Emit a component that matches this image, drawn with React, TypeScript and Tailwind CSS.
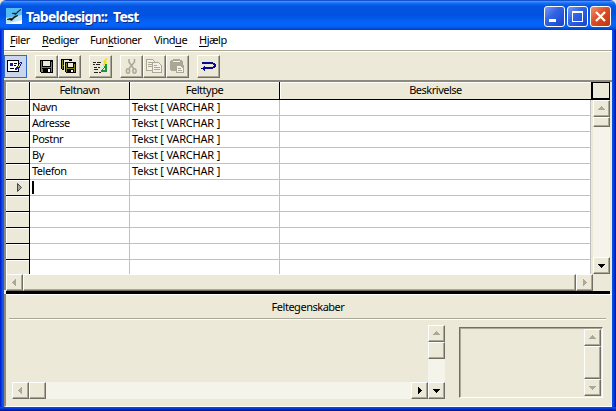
import React from "react";

const sans = "font-['Noto_Sans',sans-serif] text-[11px] leading-[16px] tracking-[-0.48px] text-black";

type Dir = "up" | "down" | "left" | "right";
const arrows: Record<Dir, string> = {
  up: "M4 9h7v-1h-1v-1h-1v-1h-1v-1h-1v1h-1v1h-1v1h-1z",
  down: "M4 6h7v1h-1v1h-1v1h-1v1h-1v-1h-1v-1h-1v-1h-1z",
  left: "M9 4v7h-1v-1h-1v-1h-1v-1h-1v-1h1v-1h1v-1h1v-1z",
  right: "M6 4v7h1v-1h1v-1h1v-1h1v-1h-1v-1h-1v-1h-1v-1z",
};
const raised =
  "bg-[#ece9d8] border border-t-white border-l-white border-r-[#716f64] border-b-[#716f64] shadow-[inset_-1px_-1px_#aca899]";

function ScrollButton({ dir, active = false }: { dir: Dir; active?: boolean }) {
  return (
    <div className={`h-[17px] w-[17px] shrink-0 ${raised}`}>
      <svg width="15" height="15" shapeRendering="crispEdges">
        <path d={arrows[dir]} fill={active ? "#000" : "#aca899"} />
      </svg>
    </div>
  );
}

function ToolButton({ children, className = "" }: { children: React.ReactNode; className?: string }) {
  return (
    <div className={`flex h-[23px] w-[23px] shrink-0 items-center justify-center ${raised} ${className}`}>
      <svg width="19" height="19" viewBox="0 0 19 19" shapeRendering="crispEdges">
        {children}
      </svg>
    </div>
  );
}

function Floppy() {
  return (
    <>
      <path d="M0 0h13v13H1l-1-1z" fill="#000" />
      <path d="M1 1h1v11H1zM11 2h1v10h-1zM2 7h9v1H2z" fill="#85831b" />
      <path d="M3 1h7v5H3z" fill="#ece9d8" />
      <path d="M8 9h2v3H8z" fill="#fff" />
      <path d="M2 9h1v3H2z" fill="#85831b" />
    </>
  );
}

function SmallFloppy() {
  return (
    <>
      <path d="M0 0h11v11H1l-1-1z" fill="#000" />
      <path d="M1 1h1v9H1zM9 2h1v8H9zM2 6h7v1H2z" fill="#85831b" />
      <path d="M3 1h5v4H3z" fill="#ece9d8" />
      <path d="M6 8h2v2H6z" fill="#fff" />
    </>
  );
}

function CaptionButton({ kind }: { kind: "min" | "max" | "close" }) {
  const bg =
    kind === "close"
      ? "bg-[linear-gradient(135deg,#ee9273,#dc4e25_45%,#bd3511)]"
      : "bg-[linear-gradient(135deg,#789df0,#3264e5_40%,#1744cb)]";
  return (
    <div className={`h-[21px] w-[21px] rounded-[3px] border border-white ${bg}`}>
      <svg width="19" height="19" fill="none" stroke="#fff">
        {kind === "min" && <path d="M4 13.5h7" strokeWidth="3" />}
        {kind === "max" && <path d="M4 5.5h11M4.5 5v10M14.5 5v10M4 14.5h11M4 4.5h11" />}
        {kind === "close" && <path d="M5 5l9 9M14 5l-9 9" strokeWidth="2.3" />}
      </svg>
    </div>
  );
}

const menus = [
  ["", "F", "iler", "w-[32px]"],
  ["", "R", "ediger", "w-[48px]"],
  ["Fun", "k", "tioner", "w-[64px]"],
  ["Vind", "u", "e", "w-[45px]"],
  ["", "H", "jælp", "w-[40px]"],
];
const names = ["Navn", "Adresse", "Postnr", "By", "Telefon", "", "", "", "", "", ""];
const headCell =
  "h-[18px] shrink-0 border-b border-black bg-[#ece9d8] text-center shadow-[inset_1px_1px_#fff] leading-[15px]";

export default function App() {
  return (
    <div className={`flex h-[411px] w-[616px] flex-col overflow-hidden bg-[#ece9d8] ${sans}`}>
      <header className="flex h-[30px] shrink-0 items-center rounded-t-[6px] bg-[linear-gradient(180deg,#0831b8_0%,#3a93ff_5%,#1570f4_10%,#0555e2_20%,#0052df_50%,#0563f8_75%,#0361f5_88%,#003dc8_100%)] pl-[6px] pr-[5px]">
        <svg width="16" height="16" className="mt-[2px]">
          <path d="M0 0h16v16H0z" fill="#fff" />
          <path d="M0 0h16v7L0 13z" fill="#55bdf3" />
          <path d="M0 10l16-3v5L0 16z" fill="#b9e3f8" />
          <path d="M6 5.500q3-1 4 0 2-3 5-4-3 2-5 5-2-1-4-1M1 11.500q4-2 5-1 2-3 6-3-4 2-6 5-2-1-5-1" fill="#111" stroke="#111" strokeWidth=".6" />
        </svg>
        <h1 className="ml-[4px] mt-[3px] w-[300px] whitespace-nowrap text-[14px] font-bold leading-[20px] tracking-[-0.75px] text-white [text-shadow:1px_1px_#062b91] [word-spacing:3px]">
          Tabeldesign:: Test
        </h1>
        <div className="ml-auto mt-[3px] flex gap-[2px]">
          <CaptionButton kind="min" />
          <CaptionButton kind="max" />
          <CaptionButton kind="close" />
        </div>
      </header>

      <div className="flex h-[377px] shrink-0">
        <div className="w-[4px] shrink-0 bg-[linear-gradient(90deg,#0019cf,#0831d9_30%,#1661ee_75%,#0855dd)]" />
        <main className="flex w-[608px] shrink-0 flex-col">
          <nav className="flex h-[20px] shrink-0 bg-white pl-[6px] leading-[20px]">
            {menus.map(([a, u, b, w]) => (
              <span key={u} className={`${w} whitespace-nowrap`}>
                {a}
                <u className="underline-offset-[2px]">{u}</u>
                {b}
              </span>
            ))}
          </nav>
          <div className="flex h-[30px] shrink-0 border-t border-[#aca899] pt-[4px] shadow-[inset_0_1px_#fff]">
            <div className="flex h-[23px] w-[23px] items-center justify-center border border-[#316ac5] bg-[#c9d6ed]">
              <svg width="19" height="19" viewBox="0 0 19 19" shapeRendering="crispEdges">
                <path d="M1 3h12v12H1z" fill="#000" />
                <path d="M2 4h10v10H2z" fill="#fff" />
                <path d="M4 6h3v3H4z" fill="#16169c" />
                <path d="M8 6h3v1H8zM8 8h2v1H8zM4 11h4v1H4z" fill="#000" />
                <path d="M14 5h2v2h-1v2h-1v2h-1v1h-2v1H9v-2h1v-1h1V9h1V8h1V6h1z" fill="#0e18a0" />
                <path d="M14 6h1v1h-1v2h-1v1h-1V9h1V7h1z" fill="#f4e933" />
              </svg>
            </div>
            <ToolButton className="ml-[8px]">
              <g transform="translate(3 3)"><Floppy /></g>
            </ToolButton>
            <ToolButton>
              <g transform="translate(1 2)"><SmallFloppy /></g>
              <path d="M4 4h12v12H4z" fill="#ece9d8" />
              <g transform="translate(5 5)"><SmallFloppy /></g>
            </ToolButton>
            <ToolButton className="ml-[8px]">
              <path d="M2 5h3v1H2zM6 5h4v1H6zM2 7h2v1H2zM5 7h4v1H5zM3 10h3v1H3zM7 10h2v1H7zM3 12h4v1H3zM3 15h4v1H3zM8 15h2v1H8z" fill="#222" />
              <path d="M15 1h1v2h-1v2h1v1h-1v1h-1v1h-1v1h-1V7h1V5h-1V4h1V3h1V2h1z" fill="#eee02a" />
              <path d="M14 7h2v8h-6v-2h1v-1h1v-1h1V9h1z" fill="#149447" />
              <path d="M13 11h1v2h-2v-1h1z" fill="#ece9d8" />
            </ToolButton>
            <ToolButton className="ml-[8px]">
              <g stroke="#aaa797" fill="none" shapeRendering="auto" strokeWidth="1.5">
                <path d="M7 2v3l4.500 6.500M12.500 2v3L7 11.500" />
                <ellipse cx="6" cy="14" rx="1.600" ry="2.300" />
                <ellipse cx="12.500" cy="14" rx="1.600" ry="2.300" />
              </g>
            </ToolButton>
            <ToolButton>
              <g fill="#f3f1e6" stroke="#aaa797">
                <path d="M1.500 2.500h6l2 2v9h-8z" />
                <path d="M3 5.500h4M3 7.500h4M3 9.500h4" />
                <path d="M7.500 5.500h6l3 3v7h-9z" />
                <path d="M9 8.500h3M9 10.500h6M9 12.500h6" />
              </g>
            </ToolButton>
            <ToolButton>
              <path d="M3 3h2V2h7v1h2v1h1v4h1v8H8v-2H3v-1H2V4h1z" fill="#aaa797" />
              <path d="M5 4h7v1H5zM9 9h4v1h1v1h1v4H9z" fill="#f3f1e6" />
              <path d="M10 11h3v1h-3zM10 13h4v1h-4z" fill="#aaa797" />
            </ToolButton>
            <ToolButton className="ml-[8px]">
              <path d="M3 5h11v1h2v1h1v3h-1v1h-2v1H6v2H5v-1H4v-1H2v-1h2v-1h1V9h1v1h8V9h1V8h-1V7H3z" fill="#0a0a8c" />
            </ToolButton>
          </div>

          <section className="flex h-[210px] shrink-0 flex-col border-l-2 border-t-2 border-[#8d8a7c]">
            <div className="flex h-[192px] shrink-0">
              <div className="w-[585px] overflow-hidden bg-white">
                <div className="flex">
                  <div className={`w-[24px] border-r ${headCell}`} />
                  <div className={`w-[100px] border-r ${headCell}`}>Feltnavn</div>
                  <div className={`w-[150px] border-r ${headCell}`}>Felttype</div>
                  <div className={`w-[311px] ${headCell}`}>Beskrivelse</div>
                </div>
                {names.map((n, i) => (
                  <div key={i} className="flex h-[16px] leading-[14px]">
                    <div className="flex w-[24px] shrink-0 justify-center border-b border-r border-black bg-[#ece9d8] pl-[3px] pt-[3px] shadow-[inset_1px_1px_#fff]">
                      {i === 5 && (
                        <svg width="7" height="10">
                          <path d="M1.500 .5v8l4-4z" fill="#aca899" stroke="#444" />
                        </svg>
                      )}
                    </div>
                    <div className="w-[100px] shrink-0 border-b border-r border-[#c0c0c0] pl-[2px]">
                      {n}
                      {i === 5 && <div className="mt-[1px] h-[13px] w-[2px] bg-black" />}
                    </div>
                    <div className="w-[150px] shrink-0 whitespace-nowrap border-b border-r border-[#c0c0c0] pl-[2px] tracking-[-0.2px]">
                      {n && "Tekst [ VARCHAR ]"}
                    </div>
                    <div className="w-[311px] shrink-0 border-b border-r border-[#c0c0c0]" />
                  </div>
                ))}
              </div>
              <div className="flex w-[19px] shrink-0 flex-col">
                <div className="h-[18px] shrink-0 border-2 border-r border-t border-black bg-[#ece9d8]" />
                <div className="ml-[2px] flex grow flex-col bg-[#f5f4eb]">
                  <ScrollButton dir="up" />
                  <div className={`h-[10px] ${raised}`} />
                  <div className="mt-auto"><ScrollButton dir="down" active /></div>
                </div>
              </div>
            </div>
            <div className="flex h-[17px] shrink-0">
              <ScrollButton dir="left" />
              <div className={`h-[17px] w-[553px] ${raised}`} />
              <ScrollButton dir="right" />
            </div>
          </section>
          <div className="ml-[2px] mr-[2px] mt-[1px] h-[3px] shrink-0 bg-black" />

          <section className="flex h-[113px] shrink-0 flex-col border-b border-l-2 border-b-white border-l-[#8d8a7c] shadow-[inset_0_1px_#fff]">
            <h2 className="h-[24px] shrink-0 pr-[2px] pt-[5px] text-center">Feltegenskaber</h2>
            <div className="ml-[3px] mr-[6px] h-[2px] shrink-0 border-b border-t border-b-white border-t-[#aca899]" />
            <div className="flex">
              <div className="ml-[6px] mt-[5px] w-[433px]">
                <div className="ml-[416px] flex h-[57px] w-[17px] flex-col bg-[#f5f4eb]">
                  <ScrollButton dir="up" />
                  <div className={`h-[17px] ${raised}`} />
                </div>
                <div className="flex h-[17px] bg-[#f5f4eb]">
                  <ScrollButton dir="left" />
                  <div className={`h-[17px] w-[17px] ${raised}`} />
                  <div className="grow" />
                  <ScrollButton dir="right" active />
                  <ScrollButton dir="down" active />
                </div>
              </div>
              <div className="ml-[14px] mt-[7px] flex h-[71px] w-[144px] justify-end border border-b-white border-l-[#716f64] border-r-white border-t-[#716f64] pr-[1px] pt-[1px] shadow-[inset_1px_1px_#aca899]">
                <div className="flex w-[17px] flex-col">
                  <ScrollButton dir="up" />
                  <div className={`h-[33px] ${raised}`} />
                  <ScrollButton dir="down" />
                </div>
              </div>
            </div>
          </section>
        </main>
        <div className="w-[4px] shrink-0 bg-[linear-gradient(90deg,#0855dd,#0648e8_30%,#0024c4_75%,#00138c)]" />
      </div>
      <footer className="h-[4px] shrink-0 bg-[linear-gradient(180deg,#0855dd,#0039dc_40%,#001ea0_75%,#00138c)]" />
    </div>
  );
}
